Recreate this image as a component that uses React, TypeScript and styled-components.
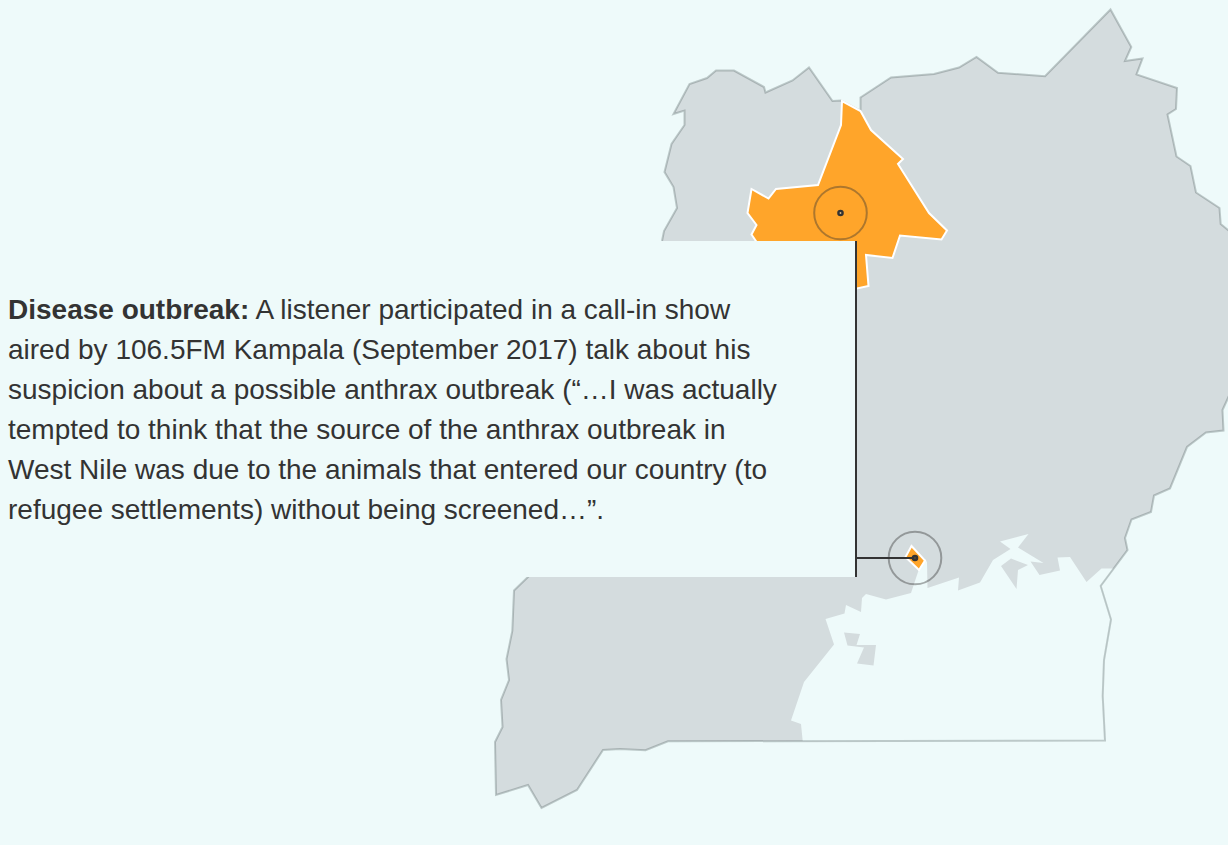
import React from "react";
import styled, { createGlobalStyle } from "styled-components";

const water = "#eefafa";
const land = "#d4dcde";
const ink = "#333333";
const highlight = "#ffa52a";

const GlobalStyle = createGlobalStyle`
  body {
    margin: 0;
    background: ${water};
    color: ${ink};
    font-family: "Helvetica Neue", "Liberation Sans", Arial, sans-serif;
    overflow-x: hidden;
  }
`;

const Story = styled.main`
  display: grid;
  grid-template-columns: minmax(0, 857fr) minmax(0, 371fr);
  grid-template-rows: 241fr auto 268fr;
`;

const CountryMap = styled.svg`
  grid-area: 1 / 1 / -1 / -1;
  display: block;
  width: 100%;
  height: auto;
`;

const Note = styled.section`
  grid-area: 2 / 1;
  z-index: 1;
  box-sizing: border-box;
  padding: 49px 64px 47px 8px;
  border-right: 2px solid ${ink};
  background: ${water};
`;

const NoteText = styled.p`
  margin: 0;
  font-size: 28px;
  line-height: 40px;
`;

const Land = styled.polygon`
  fill: ${land};
`;

const Lake = styled.polygon`
  fill: ${water};
`;

const Border = styled.polygon`
  fill: none;
  stroke: #1e2d2d;
  stroke-opacity: 0.24;
  stroke-width: 2;
`;

const District = styled.polygon`
  fill: ${highlight};
  stroke: #ffffff;
  stroke-width: 2;
`;

const Leader = styled.line`
  stroke: ${ink};
  stroke-width: 2;
`;

const Ring = styled.circle`
  fill: none;
  stroke: ${ink};
  stroke-opacity: 0.4;
  stroke-width: 2;
`;

const Dot = styled.circle<{ $filled?: boolean }>`
  fill: ${(p) => (p.$filled ? "#5c4a2c" : "#d8b888")};
  stroke: ${ink};
  stroke-width: 2.4;
`;

const country =
  "662,241 664,231 677,208 673.5,187 664.5,172 671.5,144 684.5,125 684.5,110.5 673.5,114 689.5,84 707,78 716,70.5 734,70.5 764,87 765.5,92.5 792.5,80.5 809,67.5 832.5,101 841,100.5 860.5,111 860.5,97.5 891,77.5 934,74 959,67.5 976.5,57 998,72.7 1045,76.3 1110.5,9.5 1131.3,47 1125,61 1142.5,58.5 1136.5,74.5 1177,88 1176,109 1167.5,114.5 1176.5,156.5 1190.5,166 1196,192.5 1219.5,208 1220.7,224 1250,248 1250,350 1222.5,410 1223.5,430.5 1206,432.5 1187,447 1170,488.5 1154,495.5 1151,512 1131.5,519.5 1125,538 1127.5,550 1100.7,586 1111,619.5 1104,660 1102.7,696 1105,740.5 668,741.3 645.5,750.3 620,749 603,750 577,790 541.5,808 528,785 496,795 495,742 502.5,727 501,700 509,680 506.5,659 512.3,631 514,590.5 530,575 600,500";

const lake =
  "802.7,741 801,724 791,720.5 804,682 834,644.5 825.5,619 844.5,613.5 846,605 861,612 862,598 866,594 886,599.5 911,593 919,569 925,559 927,562 927.5,588 959,577.5 958,590.5 980,582.5 993,560 1010.5,549 1000,541.5 1028.5,534 1018,547.5 1043.5,563 1030.5,561.5 1039.5,575 1060,570.5 1057.5,557.5 1070,557 1086.5,582 1101.5,568.5 1113.5,568.5 1100.7,586 1111,619.5 1104,660 1102.7,696 1105,741";

const islands = [
  "1011,558.5 1028,565 1018,570 1016.5,589 1001,566",
  "844,632.5 860,634 856.5,645 876,645 873.5,665.5 857,663.5 864,647.5 847.5,645.5",
];

const westNile =
  "842,101 860.5,111 871,130 903,159 898,164 929,213 947,230.5 941.5,239.5 900,235.5 892.5,258 866,255 868.5,286 850,290 762,250 751.5,234.5 756.5,225 747.5,213 751.5,189 768.5,198.5 776,189 818,185 841,125";

const kampala = "911.5,546 925,560.5 919,570 905.5,557";

export default function App() {
  return (
    <>
      <GlobalStyle />
      <Story>
        <CountryMap viewBox="0 0 1228 845" role="img" aria-label="Map of Uganda">
          <Land points={country} />
          <Lake points={lake} />
          {islands.map((points) => (
            <Land key={points} points={points} />
          ))}
          <Border points={country} />
          <District points={westNile} />
          <District points={kampala} />
          <Ring cx="840.5" cy="213" r="26.3" />
          <Dot cx="840.5" cy="213" r="2.1" />
          <Ring cx="915" cy="558" r="26.3" />
          <Leader x1="857" y1="558" x2="915" y2="558" />
          <Dot cx="915" cy="558" r="2.1" $filled />
        </CountryMap>
        <Note>
          <NoteText>
            <strong>Disease outbreak:</strong> A listener participated in a call-in show aired by
            106.5FM Kampala (September 2017) talk about his suspicion about a possible anthrax
            outbreak (“…I was actually tempted to think that the source of the anthrax outbreak in
            West Nile was due to the animals that entered our country (to refugee settlements)
            without being screened…”.
          </NoteText>
        </Note>
      </Story>
    </>
  );
}
